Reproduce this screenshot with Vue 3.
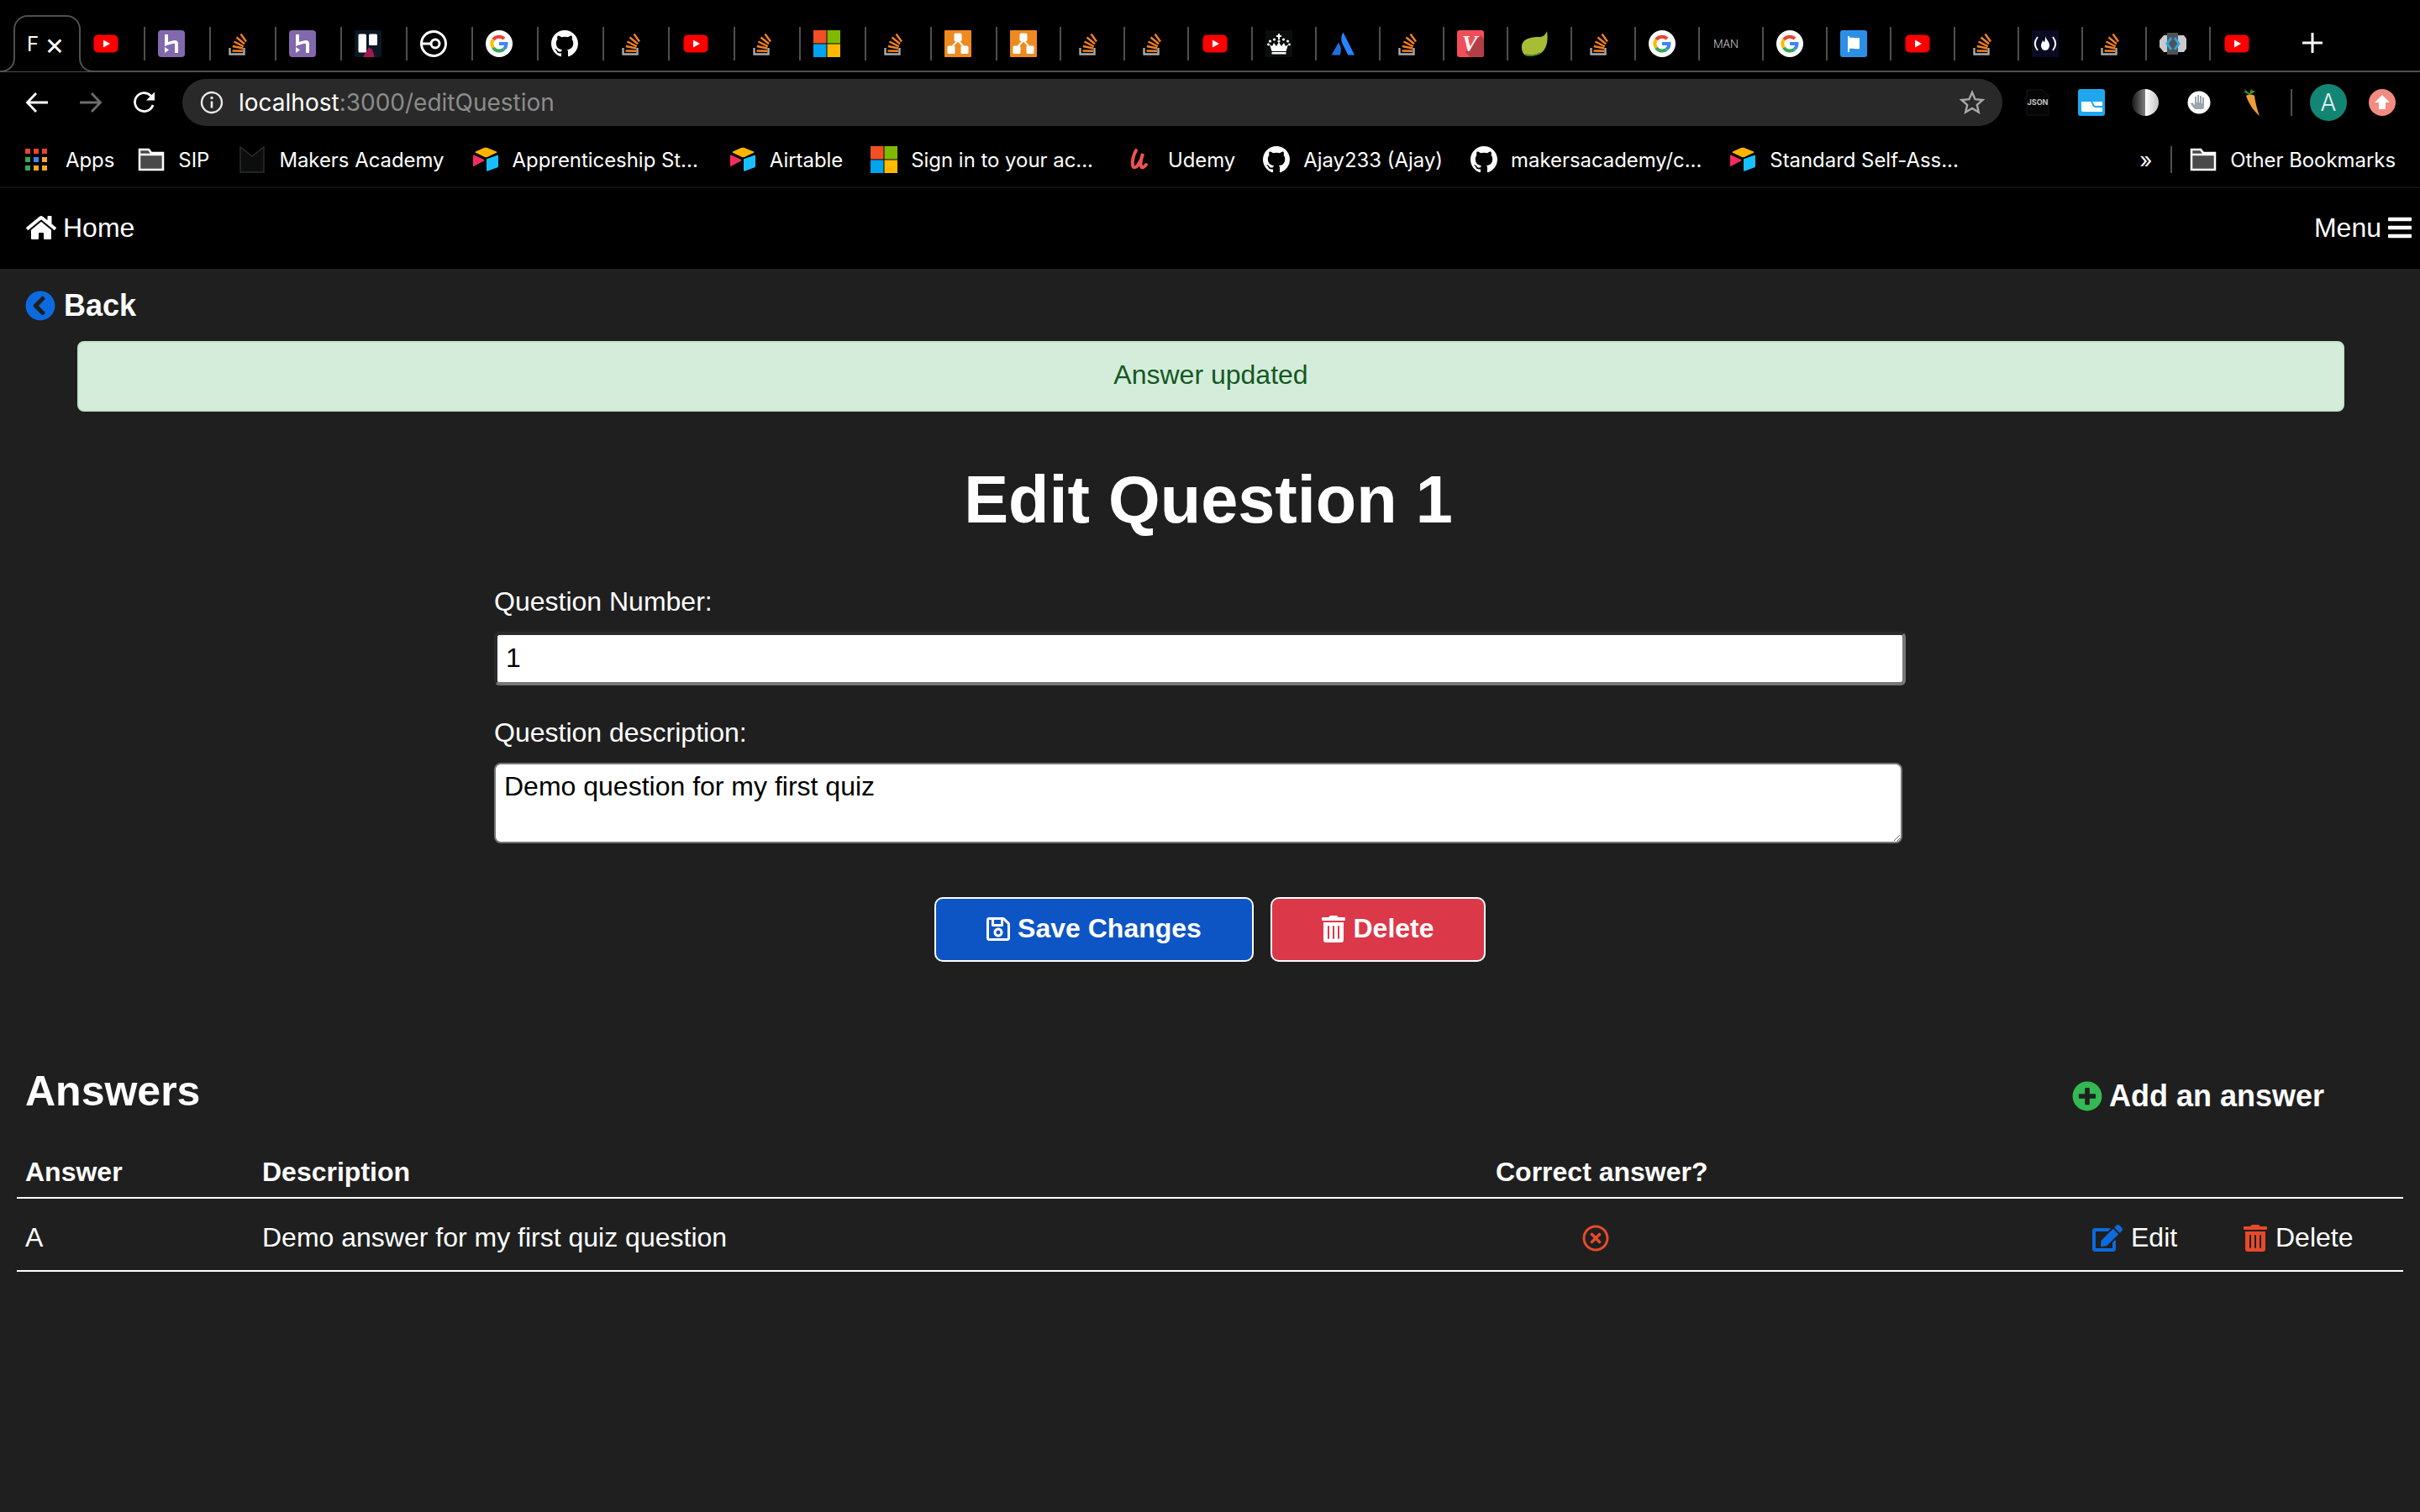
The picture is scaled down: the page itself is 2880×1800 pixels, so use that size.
<template>
  <div class="page">
    <!-- icon sprite -->
    <svg class="sprite" aria-hidden="true">
      <symbol id="yt" viewBox="0 0 32 32">
        <rect x="1.500" y="5.500" width="29" height="21" rx="5" fill="#ff0000" />
        <path d="M13 11.500l8 4.500-8 4.500z" fill="#fff" />
      </symbol>
      <symbol id="heroku" viewBox="0 0 32 32">
        <rect width="32" height="32" rx="4" fill="#8268ad" />
        <path d="M8 5h4v9c3-1 6-2 8-2 2.500 0 4 1.500 4 4v11h-4V17c0-1-.5-1.500-1.500-1.300-3 .5-6 1.500-10.500 3.300z" fill="#fff" />
        <path d="M8 27v-7l5 3.500z" fill="#fff" />
      </symbol>
      <symbol id="so" viewBox="0 0 32 32">
        <path d="M7.500 21v7.500h17V21" fill="none" stroke="#a9abae" stroke-width="2.400" />
        <path d="M10.500 24.500l12.500.3M10.800 19l12.300 2.500M12.500 13.500l11.300 5.800M15.500 8.500l9.500 7.800M20.500 4.500l6.500 9" fill="none" stroke="#f48024" stroke-width="2.400" />
      </symbol>
      <symbol id="trello" viewBox="0 0 32 32">
        <rect width="32" height="32" rx="2" fill="#0b1722" />
        <path d="M10 32l7-12 4 3 3 9z" fill="#a3174f" />
        <rect x="4.500" y="4.500" width="9.500" height="22" rx="1.500" fill="#fff" />
        <rect x="17" y="4.500" width="10" height="13.500" rx="1.500" fill="#fff" />
      </symbol>
      <symbol id="ring" viewBox="0 0 32 32">
        <circle cx="16" cy="16" r="14.500" fill="none" stroke="#fff" stroke-width="3" />
        <circle cx="18" cy="16" r="5" fill="none" stroke="#fff" stroke-width="3" />
        <path d="M2 16h11" stroke="#fff" stroke-width="3" />
      </symbol>
      <symbol id="google" viewBox="0 0 32 32">
        <circle cx="16" cy="16" r="16" fill="#fff" />
        <path d="M22 10.200A8.500 8.500 0 0 0 9 11.200" fill="none" stroke="#ea4335" stroke-width="4" />
        <path d="M9 11.200a8.500 8.500 0 0 0 0 9.600" fill="none" stroke="#fbbc05" stroke-width="4" />
        <path d="M9 20.800a8.500 8.500 0 0 0 12.500 1.800" fill="none" stroke="#34a853" stroke-width="4" />
        <path d="M21.500 22.600c2-1.700 3-4 3-6.600H16" fill="none" stroke="#4285f4" stroke-width="4" />
      </symbol>
      <symbol id="github" viewBox="0 0 16 16">
        <path fill="#fff" d="M8 0C3.580 0 0 3.580 0 8c0 3.540 2.290 6.530 5.470 7.590.4.070.55-.17.55-.38 0-.19-.01-.82-.01-1.490-2.010.37-2.530-.49-2.690-.94-.09-.23-.48-.94-.82-1.130-.28-.15-.68-.52-.01-.53.63-.01 1.080.58 1.230.82.72 1.210 1.870.87 2.330.66.07-.52.28-.87.51-1.070-1.780-.2-3.640-.89-3.640-3.950 0-.87.31-1.590.82-2.150-.08-.2-.36-1.020.08-2.120 0 0 .67-.21 2.200.82.64-.18 1.320-.27 2-.27.68 0 1.360.09 2 .27 1.530-1.040 2.200-.82 2.200-.82.44 1.100.16 1.920.08 2.120.51.56.82 1.270.82 2.150 0 3.070-1.870 3.750-3.650 3.950.29.25.54.73.54 1.480 0 1.070-.01 1.930-.01 2.200 0 .21.15.46.55.38A8.013 8.013 0 0016 8c0-4.420-3.580-8-8-8z" />
      </symbol>
      <symbol id="ms" viewBox="0 0 32 32">
        <rect width="15.500" height="15.500" fill="#f25022" />
        <rect x="16.500" width="15.500" height="15.500" fill="#7fba00" />
        <rect y="16.500" width="15.500" height="15.500" fill="#00a4ef" />
        <rect x="16.500" y="16.500" width="15.500" height="15.500" fill="#ffb900" />
      </symbol>
      <symbol id="drawio" viewBox="0 0 32 32">
        <rect width="32" height="32" rx="1" fill="#ef8a1f" />
        <path d="M16 12L8 21M16 12l8 9" stroke="#fff" stroke-width="2" />
        <rect x="11.500" y="3.500" width="9" height="9.500" rx="1.500" fill="#fff" />
        <rect x="3.500" y="18.500" width="9" height="9.500" rx="1.500" fill="#fff" />
        <rect x="19.500" y="18.500" width="9" height="9.500" rx="1.500" fill="#fff" />
      </symbol>
      <symbol id="crown" viewBox="0 0 32 32">
        <rect width="32" height="32" fill="#0b0c0c" />
        <path d="M15 4h2v2h2v2h-2v3h-2V8h-2V6h2z" fill="#fff" />
        <circle cx="16" cy="13" r="1.600" fill="#fff" /><circle cx="10.500" cy="11" r="1.600" fill="#fff" /><circle cx="21.500" cy="11" r="1.600" fill="#fff" />
        <circle cx="5.500" cy="13" r="1.600" fill="#fff" /><circle cx="26.500" cy="13" r="1.600" fill="#fff" /><circle cx="3.500" cy="17" r="1.400" fill="#fff" /><circle cx="28.500" cy="17" r="1.400" fill="#fff" />
        <path d="M5 17l3 2 2-4 3 4 3-5 3 5 3-4 2 4 3-2-2.500 8h-17z" fill="#fff" />
        <rect x="7.500" y="26" width="17" height="2.500" fill="#fff" />
      </symbol>
      <symbol id="atlassian" viewBox="0 0 32 32">
        <path d="M16.500 2.500c-3 5-3 10 0 15.500l5.800 11.500H30z" fill="#2684ff" />
        <path d="M10.500 15.500L2.500 29.500h10.300c1.800-4.500 1.300-9.500-1-14-.4-.7-1-.7-1.300 0z" fill="#1f6fe0" />
      </symbol>
      <symbol id="leaf" viewBox="0 0 32 32">
        <path d="M1 20C1 10 12 8 22 8c4 0 7-2 9-7 2 12-1 22-7 26-6 4-13 4-18 3-3-1-5-5-5-10z" fill="#a8bd35" />
        <path d="M5 29c5 2 13 1 18-2" stroke="#4e8a2a" stroke-width="2" fill="none" />
      </symbol>
      <symbol id="flag" viewBox="0 0 32 32">
        <rect width="32" height="32" rx="3" fill="#2c8fe6" />
        <path d="M9 7h2v2c4-1 7 1 12 0v13c-5 1-8-1-12 0v4H9z" fill="#fff" />
      </symbol>
      <symbol id="fcc" viewBox="0 0 32 32">
        <rect width="32" height="32" fill="#0a0a23" />
        <path d="M7 8c-4 5-4 11 0 16M25 8c4 5 4 11 0 16" fill="none" stroke="#fff" stroke-width="2" />
        <path d="M16 7c1 4 5 6 5 11 0 3-2 6-5 6s-5-3-5-6c0-3 2-4 2-6 1 1 1 2 2 2 1-2 1-4 1-7z" fill="#fff" />
      </symbol>
      <symbol id="chip" viewBox="0 0 32 32">
        <path d="M5 6h24l3 4v12l-3 4H5l-5-6v-8z" fill="#c9cbcc" />
        <path d="M9 3h13v26H9z" fill="#4f5356" />
        <path d="M14 9l-5 7 5 7M18 9l5 7-5 7" fill="none" stroke="#2ea3e3" stroke-width="3" />
      </symbol>
      <symbol id="apps" viewBox="0 0 32 32">
        <g v-for="(sq, i) in appSquares" :key="i">
          <rect :x="sq.x" :y="sq.y" width="6" height="6" :fill="sq.c" />
        </g>
      </symbol>
      <symbol id="folder" viewBox="0 0 32 28">
        <path d="M2 2h11l3 4h14v20H2z" fill="#4a4a4a" />
        <path d="M2 8h28M2 2h11l3 4h14v20H2z" fill="none" stroke="#fff" stroke-width="2.500" />
      </symbol>
      <symbol id="makers" viewBox="0 0 30 32">
        <path d="M1 1l14 11L29 1v30H1z" fill="#0c0d0d" stroke="#2c2c2c" stroke-width="1.500" />
      </symbol>
      <symbol id="airtable" viewBox="0 0 32 32">
        <path d="M14 2L4 6.500c-.5.3-.5 1 0 1.300L15 13c1 .4 2 .4 3 0l11-5.200c.5-.3.5-1 0-1.300L18 2c-1.300-.5-2.700-.5-4 0z" fill="#fcb400" />
        <path d="M17 15.500V29c0 .6.6 1 1.100.8l12-4.600c.5-.2.9-.6.9-1.100V11.500c0-.6-.6-1-1.100-.8l-12 4.300c-.5.100-.9.300-.9.500z" fill="#18bfff" />
        <path d="M14 16L2 10.500c-.7-.3-1 .1-1 .7v12.300c0 .5.300.8.800.5L14 17.500c.5-.3.500-1.200 0-1.500z" fill="#f82b60" />
      </symbol>
      <symbol id="udemy" viewBox="0 0 28 32">
        <path d="M8 5c-3 5-5 13-4 18 .5 3 4 3 6 0 3-4 5-9 6-14-2 6-3 12-2 15 .6 2 3 2 6-2" fill="none" stroke="#ec5252" stroke-width="4" stroke-linecap="round" />
      </symbol>
      <symbol id="drive" viewBox="0 0 32 32">
        <rect width="32" height="32" rx="3" fill="#1fa7ee" />
        <path d="M4 15h10c2 0 2 2 3 4s2 3 4 3h8v5H6a2 2 0 0 1-2-2zM17 15h12v5h-8c-2 0-2-3-4-5z" fill="#fff" />
      </symbol>
      <symbol id="moon" viewBox="0 0 32 32">
        <defs>
          <linearGradient id="moonl" x1="0" x2="1"><stop offset="0" stop-color="#151515" /><stop offset="1" stop-color="#808080" /></linearGradient>
          <linearGradient id="moonr" x1="0" x2="1"><stop offset="0" stop-color="#fff" /><stop offset="1" stop-color="#c4c4c4" /></linearGradient>
        </defs>
        <path d="M16 0a16 16 0 0 0 0 32z" fill="url(#moonl)" />
        <path d="M16 0a16 16 0 0 1 0 32z" fill="url(#moonr)" />
      </symbol>
      <symbol id="hand" viewBox="0 0 32 32">
        <circle cx="16" cy="16" r="13.500" fill="#fff" />
        <path d="M11 24c-2-2-4-5-5-7l2-1 3 3V9h2v7h1V7h2v9h1V8h2v9h1v-7h2v11c0 2-1 3-3 3z" fill="#9aa5ad" />
      </symbol>
      <symbol id="carrot" viewBox="0 0 32 32">
        <path d="M8 8c3-2 8-2 10 0 1 8 3 16 6 24-7-6-13-15-16-24z" fill="#ef9d3c" />
        <path d="M11 7C9 5 7 4 4 3h3l-1-3 6 5 2-5 2 2h3l-3 3z" fill="#3f8a2a" />
      </symbol>
      <symbol id="upload" viewBox="0 0 32 32">
        <circle cx="16" cy="16" r="16" fill="#f28b82" />
        <path d="M16 7l9 9h-5v8h-8v-8H7z" fill="#fff" />
      </symbol>
    </svg>

    <!-- browser chrome -->
    <div class="tabstrip">
      <div class="tab active">
        <svg class="tab-outline" width="112" height="68" viewBox="0 0 112 68">
          <path d="M0 67c10 0 17-6 17-16V17C17 8 24 1 33 1h46c9 0 16 7 16 16v34c0 10 7 16 17 16" fill="#000" stroke="#4f4f4f" stroke-width="2" />
        </svg>
        <span class="tab-title">F</span>
        <span class="tab-close">×</span>
      </div>
      <div v-for="(tab, i) in tabs" :key="i" class="tab" :class="{ narrow: i >= 14 }">
        <svg v-if="tab === 'man'" class="fav" viewBox="0 0 32 32">
          <text x="16" y="21" text-anchor="middle" font-family="Inter, sans-serif" font-weight="200" font-size="13" fill="#fff">MAN</text>
        </svg>
        <svg v-else-if="tab === 'v'" class="fav" viewBox="0 0 32 32">
          <rect width="32" height="32" rx="3" fill="#f24e59" />
          <path d="M10 26L28 6l4 4v19a3 3 0 0 1-3 3H16z" fill="#b23e48" />
          <text x="15" y="25" text-anchor="middle" font-family="Liberation Serif, serif" font-style="italic" font-weight="700" font-size="28" fill="#f2f2f2">V</text>
        </svg>
        <svg v-else class="fav"><use :href="'#' + tab" /></svg>
        <span v-if="i < tabs.length - 1" class="tab-sep"></span>
      </div>
      <svg class="new-tab" width="24" height="24" viewBox="0 0 24 24">
        <path d="M12 1v22M1 12h22" stroke="#fff" stroke-width="3" stroke-linecap="round" />
      </svg>
    </div>

    <div class="toolbar">
      <span class="tool">
        <svg width="28" height="28" viewBox="0 0 28 28"><path d="M27 14H3M13 3L2.500 14 13 25" fill="none" stroke="#fff" stroke-width="2.800" /></svg>
      </span>
      <span class="tool">
        <svg width="28" height="28" viewBox="0 0 28 28"><path d="M1 14h24M15 3l10.500 11L15 25" fill="none" stroke="#6d6d6d" stroke-width="2.800" /></svg>
      </span>
      <span class="tool">
        <svg width="28" height="28" viewBox="0 0 28 28"><path d="M24 17a11 11 0 1 1-2.500-11" fill="none" stroke="#fff" stroke-width="2.800" /><path d="M26 1.500v10H16z" fill="#fff" /></svg>
      </span>
      <div class="omnibox">
        <svg class="info" width="28" height="28" viewBox="0 0 28 28">
          <circle cx="14" cy="14" r="12" fill="none" stroke="#e8e8e8" stroke-width="2.400" />
          <path d="M14 12.500v8" stroke="#e8e8e8" stroke-width="2.600" /><circle cx="14" cy="8.500" r="1.700" fill="#e8e8e8" />
        </svg>
        <span class="url">localhost<span class="url-dim">:3000/editQuestion</span></span>
        <svg class="star" width="30" height="30" viewBox="0 0 30 30">
          <path d="M15 3l3.600 8.200 8.900.8-6.700 5.900 2 8.700-7.800-4.600-7.800 4.600 2-8.700L2.500 12l8.900-.8z" fill="none" stroke="#a8a8a8" stroke-width="2.400" />
        </svg>
      </div>
      <div class="extensions">
        <svg class="ext" viewBox="0 0 32 32">
          <path d="M3 1h19l7 7v23H3z" fill="#050505" stroke="#161616" />
          <text x="16" y="19" text-anchor="middle" font-family="Inter, sans-serif" font-size="9" font-weight="700" fill="#c4c4c4">JSON</text>
        </svg>
        <svg class="ext"><use href="#drive" /></svg>
        <svg class="ext"><use href="#moon" /></svg>
        <svg class="ext"><use href="#hand" /></svg>
        <svg class="ext"><use href="#carrot" /></svg>
        <span class="ext-sep"></span>
        <span class="avatar">A</span>
        <svg class="ext up"><use href="#upload" /></svg>
      </div>
    </div>

    <div class="bookmarks">
      <div v-for="b in bookmarks" :key="b.label" class="bookmark" :class="b.cls">
        <svg class="bm-icon"><use :href="'#' + b.icon" /></svg>
        <span>{{ b.label }}</span>
      </div>
      <span class="bm-more">»</span>
      <span class="bm-sep"></span>
      <div class="bookmark other">
        <svg class="bm-icon"><use href="#folder" /></svg>
        <span>Other Bookmarks</span>
      </div>
    </div>

    <!-- app -->
    <nav class="navbar">
      <a class="nav-link">
        <svg width="36" height="32" viewBox="0 0 576 512"><path fill="#fff" d="M280.370 148.260L96 300.110V464a16 16 0 0 0 16 16l112.060-.29a16 16 0 0 0 15.920-16V368a16 16 0 0 1 16-16h64a16 16 0 0 1 16 16v95.640a16 16 0 0 0 16 16.050L464 480a16 16 0 0 0 16-16V300L295.670 148.260a12.190 12.190 0 0 0-15.300 0zM571.600 251.470L488 182.560V44.050a12 12 0 0 0-12-12h-56a12 12 0 0 0-12 12v72.610L318.470 43a48 48 0 0 0-61 0L4.340 251.470a12 12 0 0 0-1.600 16.900l25.500 31A12 12 0 0 0 45.150 301l235.220-193.740a12.190 12.190 0 0 1 15.300 0L530.900 301a12 12 0 0 0 16.900-1.600l25.500-31a12 12 0 0 0-1.700-16.930z" /></svg>
        Home
      </a>
      <a class="nav-link">
        Menu
        <svg width="28" height="32" viewBox="0 0 448 512"><path fill="#fff" d="M16 132h416c8.837 0 16-7.163 16-16V76c0-8.837-7.163-16-16-16H16C7.163 60 0 67.163 0 76v40c0 8.837 7.163 16 16 16zm0 160h416c8.837 0 16-7.163 16-16v-40c0-8.837-7.163-16-16-16H16c-8.837 0-16 7.163-16 16v40c0 8.837 7.163 16 16 16zm0 160h416c8.837 0 16-7.163 16-16v-40c0-8.837-7.163-16-16-16H16c-8.837 0-16 7.163-16 16v40c0 8.837 7.163 16 16 16z" /></svg>
      </a>
    </nav>

    <main class="content">
      <a class="back">
        <svg width="36" height="36" viewBox="0 0 512 512"><path fill="#0d6ade" d="M256 504C119 504 8 393 8 256S119 8 256 8s248 111 248 248-111 248-248 248zM142.100 273l135.500 135.500c9.400 9.400 24.600 9.400 33.900 0l17-17c9.400-9.400 9.400-24.600 0-33.900L226.900 256l101.600-101.600c9.400-9.400 9.400-24.600 0-33.900l-17-17c-9.400-9.400-24.600-9.400-33.900 0L142.100 239c-9.400 9.400-9.400 24.600 0 34z" /></svg>
        Back
      </a>

      <div class="alert">Answer updated</div>

      <h1>Edit Question 1</h1>

      <form class="question-form" @submit.prevent>
        <label for="number">Question Number:</label>
        <input id="number" type="text" value="1" />
        <label for="description">Question description:</label>
        <textarea id="description">Demo question for my first quiz</textarea>

        <div class="form-actions">
          <button type="submit" class="btn btn-save">
            <svg width="28" height="32" viewBox="0 0 448 512"><path fill="#fff" d="M433.941 129.941l-83.882-83.882A48 48 0 0 0 316.118 32H48C21.490 32 0 53.490 0 80v352c0 26.510 21.490 48 48 48h352c26.510 0 48-21.490 48-48V163.882a48 48 0 0 0-14.059-33.941zM272 80v80H144V80h128zm122 352H54a6 6 0 0 1-6-6V86a6 6 0 0 1 6-6h42v104c0 13.255 10.745 24 24 24h176c13.255 0 24-10.745 24-24V83.882l78.243 78.243a6 6 0 0 1 1.757 4.243V426a6 6 0 0 1-6 6zM224 232c-48.523 0-88 39.477-88 88s39.477 88 88 88 88-39.477 88-88-39.477-88-88-88zm0 128c-22.056 0-40-17.944-40-40s17.944-40 40-40 40 17.944 40 40-17.944 40-40 40z" /></svg>
            Save Changes
          </button>
          <button type="button" class="btn btn-delete">
            <svg width="28" height="32" viewBox="0 0 448 512"><path fill="#fff" d="M32 464a48 48 0 0 0 48 48h288a48 48 0 0 0 48-48V128H32zm272-256a16 16 0 0 1 32 0v224a16 16 0 0 1-32 0zm-96 0a16 16 0 0 1 32 0v224a16 16 0 0 1-32 0zm-96 0a16 16 0 0 1 32 0v224a16 16 0 0 1-32 0zM432 32H312l-9.400-18.700A24 24 0 0 0 281.100 0H166.800a23.720 23.720 0 0 0-21.400 13.300L136 32H16A16 16 0 0 0 0 48v32a16 16 0 0 0 16 16h416a16 16 0 0 0 16-16V48a16 16 0 0 0-16-16z" /></svg>
            Delete
          </button>
        </div>
      </form>

      <div class="answers-head">
        <h2>Answers</h2>
        <a class="add-answer">
          <svg width="36" height="36" viewBox="0 0 512 512"><path fill="#34b853" d="M256 8C119 8 8 119 8 256s111 248 248 248 248-111 248-248S393 8 256 8zm144 276c0 6.600-5.400 12-12 12h-92v92c0 6.600-5.400 12-12 12h-56c-6.600 0-12-5.400-12-12v-92h-92c-6.600 0-12-5.400-12-12v-56c0-6.600 5.400-12 12-12h92v-92c0-6.600 5.400-12 12-12h56c6.600 0 12 5.400 12 12v92h92c6.600 0 12 5.400 12 12v56z" /></svg>
          Add an answer
        </a>
      </div>

      <table class="answers">
        <colgroup>
          <col class="col-answer" />
          <col class="col-desc" />
          <col class="col-correct" />
          <col class="col-edit" />
          <col />
        </colgroup>
        <thead>
          <tr>
            <th>Answer</th>
            <th>Description</th>
            <th>Correct answer?</th>
            <th></th>
            <th></th>
          </tr>
        </thead>
        <tbody>
          <tr v-for="a in answers" :key="a.letter">
            <td>{{ a.letter }}</td>
            <td>{{ a.text }}</td>
            <td>
              <svg class="wrong" width="32" height="32" viewBox="0 0 512 512"><path fill="#e64a2b" d="M256 8C119 8 8 119 8 256s111 248 248 248 248-111 248-248S393 8 256 8zm0 448c-110.500 0-200-89.500-200-200S145.500 56 256 56s200 89.500 200 200-89.500 200-200 200zm101.800-262.200L295.600 256l62.200 62.200c4.700 4.700 4.700 12.300 0 17l-22.600 22.600c-4.700 4.700-12.300 4.700-17 0L256 295.600l-62.200 62.200c-4.700 4.700-12.300 4.700-17 0l-22.600-22.600c-4.700-4.700-4.700-12.300 0-17l62.200-62.200-62.200-62.200c-4.700-4.700-4.700-12.300 0-17l22.600-22.600c4.700-4.700 12.300-4.700 17 0l62.200 62.200 62.200-62.200c4.700-4.700 12.300-4.700 17 0l22.600 22.600c4.700 4.700 4.700 12.300 0 17z" /></svg>
            </td>
            <td>
              <a class="row-action">
                <svg width="36" height="32" viewBox="0 0 576 512"><path fill="#0d6ade" d="M402.600 83.200l90.200 90.200c3.800 3.800 3.800 10 0 13.800L274.400 405.600l-92.800 10.300c-12.400 1.400-22.900-9.100-21.500-21.500l10.300-92.800L388.800 83.200c3.800-3.800 10-3.800 13.800 0zm162-22.900l-48.800-48.800c-15.200-15.200-39.900-15.200-55.200 0l-35.400 35.400c-3.800 3.800-3.800 10 0 13.800l90.200 90.200c3.800 3.800 10 3.800 13.800 0l35.400-35.400c15.200-15.300 15.200-40 0-55.200zM384 346.200V448H64V128h229.800c3.200 0 6.200-1.300 8.500-3.500l40-40c7.600-7.600 2.200-20.500-8.500-20.500H48C21.500 64 0 85.500 0 112v352c0 26.500 21.500 48 48 48h352c26.500 0 48-21.500 48-48V306.200c0-10.700-12.900-16-20.500-8.500l-40 40c-2.200 2.300-3.500 5.300-3.500 8.500z" /></svg>
                Edit
              </a>
            </td>
            <td>
              <a class="row-action">
                <svg width="28" height="32" viewBox="0 0 448 512"><path fill="#e64a2b" d="M32 464a48 48 0 0 0 48 48h288a48 48 0 0 0 48-48V128H32zm272-256a16 16 0 0 1 32 0v224a16 16 0 0 1-32 0zm-96 0a16 16 0 0 1 32 0v224a16 16 0 0 1-32 0zm-96 0a16 16 0 0 1 32 0v224a16 16 0 0 1-32 0zM432 32H312l-9.400-18.700A24 24 0 0 0 281.100 0H166.800a23.720 23.720 0 0 0-21.400 13.300L136 32H16A16 16 0 0 0 0 48v32a16 16 0 0 0 16 16h416a16 16 0 0 0 16-16V48a16 16 0 0 0-16-16z" /></svg>
                Delete
              </a>
            </td>
          </tr>
        </tbody>
      </table>
    </main>
  </div>
</template>

<script setup>
const tabs = [
  'yt', 'heroku', 'so', 'heroku', 'trello', 'ring', 'google', 'github', 'so', 'yt', 'so', 'ms', 'so', 'drawio',
  'drawio', 'so', 'so', 'yt', 'crown', 'atlassian', 'so', 'v', 'leaf', 'so', 'google', 'man', 'google', 'flag',
  'yt', 'so', 'fcc', 'so', 'chip', 'yt'
]

const bookmarks = [
  { icon: 'apps', label: 'Apps', cls: 'bm-apps' },
  { icon: 'folder', label: 'SIP' },
  { icon: 'makers', label: 'Makers Academy', cls: 'bm-makers' },
  { icon: 'airtable', label: 'Apprenticeship St...' },
  { icon: 'airtable', label: 'Airtable', cls: 'bm-air' },
  { icon: 'ms', label: 'Sign in to your ac...' },
  { icon: 'udemy', label: 'Udemy', cls: 'bm-udemy' },
  { icon: 'github', label: 'Ajay233 (Ajay)' },
  { icon: 'github', label: 'makersacademy/c...' },
  { icon: 'airtable', label: 'Standard Self-Ass...' }
]

const appColors = ['#ea4335', '#ea4335', '#ea4335', '#34a853', '#4285f4', '#f9a825', '#34a853', '#f9a825', '#f9a825']
const appSquares = appColors.map((c, i) => ({ x: (i % 3) * 10, y: 3 + Math.floor(i / 3) * 10, c }))

const answers = [{ letter: 'A', text: 'Demo answer for my first quiz question' }]
</script>

<style>
html,
body {
  margin: 0;
  background: #1f1f1f;
}
</style>

<style scoped>
.page {
  min-height: 1800px;
  background: #1f1f1f;
  color: #fff;
  font-family: 'Liberation Sans', Arial, sans-serif;
  font-size: 32px;
}
.sprite {
  position: absolute;
  width: 0;
  height: 0;
}

/* browser chrome */
.tabstrip {
  display: flex;
  align-items: flex-end;
  height: 84px;
  padding-left: 17px;
  background: #000;
  border-bottom: 2px solid #4f4f4f;
}
.tab {
  position: relative;
  display: flex;
  align-items: center;
  width: 78px;
  height: 66px;
  padding: 2px 0 0 15px;
  box-sizing: border-box;
}
.tab.narrow {
  width: 76px;
}
.tab.active {
  margin-bottom: -2px;
  height: 68px;
  padding: 0 0 0 15px;
  font-family: Inter, sans-serif;
}
.tab-outline {
  position: absolute;
  left: -17px;
  top: 0;
}
.tab-title {
  position: relative;
  width: 12px;
  font-size: 24px;
}
.tab-close {
  position: relative;
  margin-left: 9px;
  font-size: 36px;
  line-height: 1;
}
.fav {
  width: 32px;
  height: 32px;
}
.tab-sep {
  margin-left: auto;
  width: 2px;
  height: 40px;
  background: #4f4f4f;
}
.new-tab {
  margin: 0 0 21px 33px;
}

.toolbar {
  display: flex;
  align-items: center;
  height: 72px;
  padding-left: 12px;
  background: #000;
}
.tool {
  display: flex;
  justify-content: center;
  width: 64px;
}
.omnibox {
  display: flex;
  align-items: center;
  width: 2166px;
  height: 56px;
  margin-left: 13px;
  padding: 0 21px 0 21px;
  box-sizing: border-box;
  background: #292929;
  border-radius: 28px;
  font-family: Inter, sans-serif;
}
.url {
  margin-left: 18px;
  font-size: 28px;
  color: #fff;
}
.url-dim {
  color: #8c8c8c;
}
.star {
  margin-left: auto;
}
.extensions {
  display: flex;
  align-items: center;
  gap: 32px;
  margin-left: 26px;
}
.ext {
  width: 32px;
  height: 32px;
}
.ext-sep {
  width: 2px;
  height: 32px;
  margin-left: -3px;
  background: #4f4f4f;
}
.avatar {
  display: flex;
  align-items: center;
  justify-content: center;
  width: 44px;
  height: 44px;
  margin-left: -11px;
  border-radius: 50%;
  background: #138574;
  font-family: Inter, sans-serif;
  font-size: 28px;
  font-weight: 300;
  color: #e8f5f2;
}
.up {
  margin-left: -6px;
}

.bookmarks {
  display: flex;
  align-items: center;
  gap: 33px;
  height: 64px;
  padding-left: 30px;
  background: #000;
  border-bottom: 2px solid #111;
  font-family: Inter, sans-serif;
  font-size: 23.900px;
}
.bookmark {
  display: flex;
  align-items: center;
  gap: 16px;
}
.bm-apps {
  margin-right: -5px;
}
.bm-makers {
  margin-left: 2px;
}
.bm-air {
  margin-left: 4px;
}
.bm-udemy {
  margin-left: 8px;
}
.bm-icon {
  width: 32px;
  height: 32px;
}
.bm-more {
  margin-left: auto;
  font-size: 26px;
}
.bm-sep {
  width: 2px;
  height: 32px;
  margin-left: -11px;
  background: #4f4f4f;
}
.bookmark.other {
  margin-left: -12px;
  margin-right: 29px;
}

/* app */
.navbar {
  display: flex;
  align-items: center;
  justify-content: space-between;
  height: 94px;
  padding: 0 10px 2px 31px;
  background: #000;
}
.nav-link {
  display: flex;
  align-items: center;
  gap: 8px;
}
.content {
  padding-top: 23px;
}
.back {
  display: flex;
  align-items: center;
  gap: 10px;
  height: 42px;
  padding-left: 30px;
  font-size: 36px;
  font-weight: 700;
}
.alert {
  margin: 21px 90px 0 92px;
  padding: 18px 20px 22px;
  border: 2px solid #c3e6cb;
  border-radius: 8px;
  background: #d4edda;
  color: #155724;
  line-height: 40px;
  text-align: center;
}
h1 {
  margin: 57px 4px 0 0;
  font-size: 79.300px;
  line-height: 96px;
  font-weight: 700;
  text-align: center;
}
.question-form {
  display: flex;
  flex-direction: column;
  align-items: flex-start;
  margin: 54px 0 0 588px;
  width: 1704px;
}
.question-form label {
  line-height: 38px;
}
.question-form input,
.question-form textarea {
  box-sizing: border-box;
  margin-top: 17px;
  background: #fff;
  color: #000;
  font-family: inherit;
  font-size: 32px;
  outline: none;
}
.question-form input {
  width: 1680px;
  height: 64px;
  padding: 0 10px 2px;
  border: 4px solid #767676;
  border-top-color: #2b2b2b;
  border-left-color: #2b2b2b;
  border-radius: 6px;
}
.question-form label[for='description'] {
  margin-top: 37px;
}
.question-form textarea {
  width: 1676px;
  height: 96px;
  padding: 8px 10px;
  border: 2px solid #767676;
  border-radius: 8px;
}
.form-actions {
  display: flex;
  gap: 20px;
  margin: 64px 0 0 524px;
}
.btn {
  display: flex;
  align-items: center;
  justify-content: center;
  gap: 9px;
  height: 77px;
  padding-bottom: 3px;
  border: 2px solid #fff;
  border-radius: 10px;
  color: #fff;
  font-family: inherit;
  font-size: 32px;
  font-weight: 700;
}
.btn-save {
  width: 380px;
  background: #0d55c4;
}
.btn-delete {
  width: 256px;
  background: #db3849;
}
.answers-head {
  display: flex;
  justify-content: space-between;
  align-items: flex-start;
  margin-top: 126px;
  padding: 0 114px 0 30px;
}
h2 {
  margin: 0;
  font-size: 50px;
  line-height: 56px;
  font-weight: 700;
}
.add-answer {
  display: flex;
  align-items: center;
  gap: 8px;
  margin-top: 13px;
  font-size: 36px;
  font-weight: 700;
}
.answers {
  width: 2840px;
  margin: 38px 0 0 20px;
  border-collapse: separate;
  border-spacing: 0;
  table-layout: fixed;
}
.col-answer {
  width: 282px;
}
.col-desc {
  width: 1468px;
}
.col-correct {
  width: 710px;
}
.col-edit {
  width: 180px;
}
.answers th,
.answers td {
  padding: 0 0 0 10px;
  border-bottom: 2px solid #fff;
  text-align: left;
  vertical-align: middle;
}
.answers th {
  height: 60px;
  font-weight: 700;
}
.answers td {
  height: 87px;
  padding-top: 8px;
  box-sizing: border-box;
}
.wrong {
  display: block;
  margin-left: 103px;
}
.row-action {
  display: flex;
  align-items: center;
  gap: 10px;
}
</style>
